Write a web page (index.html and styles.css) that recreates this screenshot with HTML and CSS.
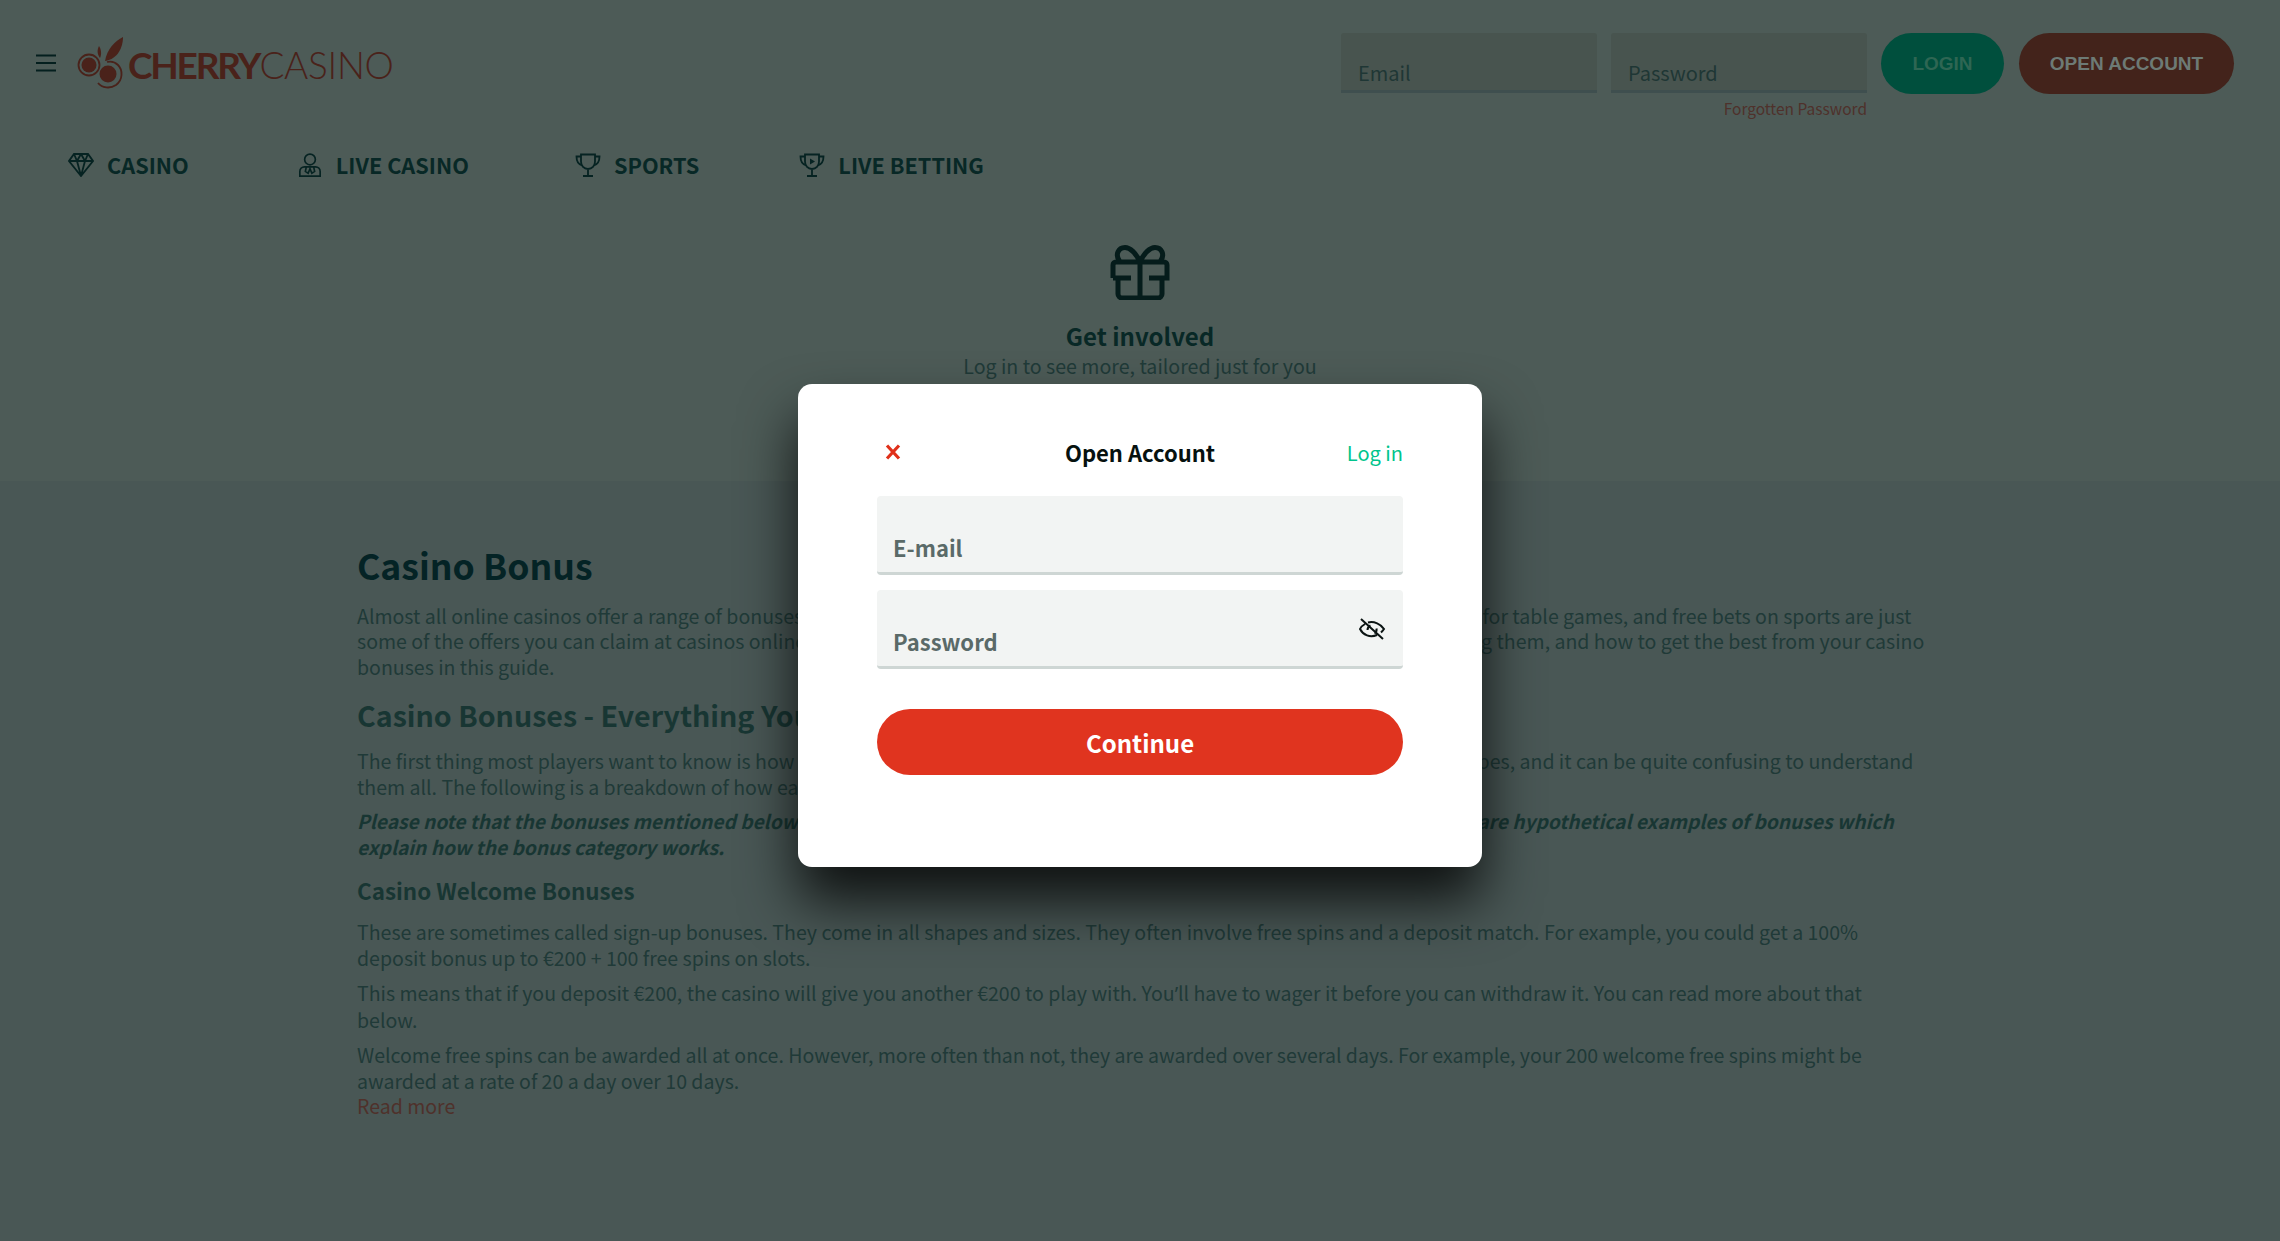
FILE: index.html
```html
<!DOCTYPE html>
<html>
<head>
    <meta charset="UTF-8">
    <meta name="viewport" content="width=device-width, initial-scale=1.0">
    <title>Cherry Casino</title>
    <link rel="stylesheet" href="styles.css">
</head>
<body>
    <div class="hero">
        <header class="topbar">
            <div class="brand">
                <svg class="burger" viewBox="0 0 20 18"><path d="M0 1.5h20M0 9h20M0 16.5h20"/></svg>
                <svg class="cherry" viewBox="0 0 48 52">
                    <path class="fill" d="M28 24C30 12 38 4 46 0c0 10-5 22-18 24z"/>
                    <path class="fill" d="M23 21c-3-4-3-8-1-12 2 3 3 8 1 12z"/>
                    <circle class="fill" cx="12" cy="28" r="7.5"/>
                    <circle class="ring" cx="12" cy="28" r="10.5"/>
                    <circle class="fill" cx="31" cy="37" r="8.5"/>
                    <path class="ring" d="M21 46c4 5 12 6 18 2 7-5 7-15 2-20-3-3-7-4-11-3"/>
                </svg>
                <span class="logo"><b>CHERRY</b>CASINO</span>
            </div>
            <form class="auth">
                <div class="authField"><div class="dimInput">Email</div></div>
                <div class="authField">
                    <div class="dimInput">Password</div>
                    <a class="forgot">Forgotten Password</a>
                </div>
                <button type="button" class="loginBtn">LOGIN</button>
                <button type="button" class="openBtn">OPEN ACCOUNT</button>
            </form>
        </header>

        <nav class="mainNav">
            <a class="navItem">
                <svg viewBox="0 0 26 24"><path d="M6 1h14l5 7-12 15L1 8zM1 8h24M9 8l4 15 4-15M6 1l3 7 4-7 4 7 3-7"/></svg>
                CASINO
            </a>
            <a class="navItem liveCasino">
                <svg viewBox="0 0 26 26"><circle cx="13" cy="7" r="5.8"/><path d="M2 25v-5a5 5 0 0 1 5-5h12a5 5 0 0 1 5 5v5zM9 15l-1 5 3 2 2-5 2 5 3-2-1-5"/></svg>
                LIVE CASINO
            </a>
            <a class="navItem sports">
                <svg viewBox="0 0 26 24"><path d="M6 1.5h14v7c0 4.5-3 7.5-7 7.5s-7-3-7-7.5zM6 3.500H1.500c0 5 1.500 8 6 9M20 3.500h4.500c0 5-1.500 8-6 9M13 16v6.500M8 23h10"/></svg>
                SPORTS
            </a>
            <a class="navItem">
                <svg viewBox="0 0 26 24"><path d="M6 1.5h14v7c0 4.5-3 7.5-7 7.5s-7-3-7-7.500zM6 3.500H1.500c0 5 1.500 8 6 9M20 3.500h4.500c0 5-1.500 8-6 9M13 16v6.500M8 23h10"/><path class="play" d="M11 5.500l5 3-5 3z"/></svg>
                LIVE BETTING
            </a>
        </nav>

        <div class="promo">
            <svg class="gift" viewBox="0 0 60 55"><path d="M3 33V20a3 3 0 0 1 3-3h48a3 3 0 0 1 3 3v13H39M3 33h18M8 34v15a4 4 0 0 0 4 4h36a4 4 0 0 0 4-4V34M30 17v36M30 17C26 8 20 2.500 15 2.500 8 2.500 5 10 9.500 16M30 17c4-9 10-14.500 15-14.500 7 0 10 7.500 5.500 13.500"/></svg>
            <h2>Get involved</h2>
            <p>Log in to see more, tailored just for you</p>
        </div>
    </div>

    <main class="article">
        <h1>Casino Bonus</h1>
        <p class="intro">Almost all online casinos offer a range of bonuses. Welcome bonuses, free spins, cashback, reload offers, extra bonus money for table games, and free bets on sports are just<br>some of the offers you can claim at casinos online. We explain clearly what they are, how they work, how to go about claiming them, and how to get the best from your casino<br>bonuses in this guide.</p>
        <h2>Casino Bonuses - Everything You Need to Know</h2>
        <p class="afterH2">The first thing most players want to know is how much bonus money they can get. There are a great many different bonus types, and it can be quite confusing to understand<br>them all. The following is a breakdown of how each of the main bonus types works.</p>
        <p class="note">Please note that the bonuses mentioned below are not necessarily available on this site at this stage or to players. They are hypothetical examples of bonuses which<br>explain how the bonus category works.</p>
        <h3>Casino Welcome Bonuses</h3>
        <p class="afterH3">These are sometimes called sign-up bonuses. They come in all shapes and sizes. They often involve free spins and a deposit match. For example, you could get a 100%<br>deposit bonus up to €200 + 100 free spins on slots.</p>
        <p>This means that if you deposit €200, the casino will give you another €200 to play with. You<span class="apos">’</span>ll have to wager it before you can withdraw it. You can read more about that<br>below.</p>
        <p>Welcome free spins can be awarded all at once. However, more often than not, they are awarded over several days. For example, your 200 welcome free spins might be<br>awarded at a rate of 20 a day over 10 days.</p>
        <a class="readMore">Read more</a>
    </main>

    <div class="modal">
        <div class="modalHead">
            <svg class="closeX" viewBox="0 0 16 16"><path d="M2 1.500l12 13M14 1.500l-12 13"/></svg>
            <strong>Open Account</strong>
            <a class="logIn">Log in</a>
        </div>
        <div class="field">E-mail</div>
        <div class="field">
            Password
            <svg class="eye" viewBox="0 0 28 22"><path d="M3 1l22 20M7 6C3.500 8 2.500 9.500 2 11c3 6 10 9 17 6M10 4.500C16 3 23 6 26 11c-1 1.500-2 2.500-3 3.500M9.500 12c0-2 1-3.500 3-4.500M18.500 10.500c.5 2.500-.5 4-2 5"/></svg>
        </div>
        <button type="button" class="continueBtn">Continue</button>
    </div>
</body>
</html>
```

FILE: styles.css
```css
*{ margin: 0; padding: 0; box-sizing: border-box; }
body{ background: #495755; color: #203a38; font-family: "Noto Sans CJK SC", "Source Sans Pro", sans-serif; min-height: 1241px; overflow: hidden; }
a{ display: block; }
svg{ display: block; fill: none; }

.hero{ height: 481px; background: #4d5b57; padding-top: 33px; }
.topbar{ height: 61px; display: flex; justify-content: space-between; align-items: flex-start; padding: 0 46px 0 36px; }
.brand{ display: flex; align-items: center; height: 61px; }
.burger{ width: 20px; height: 18px; stroke: #041f1e; stroke-width: 2; margin-top: -2px; }
.cherry{ width: 48px; height: 52px; margin-left: 21px; margin-top: -1px; }
.cherry .fill{ fill: #4a221a; }
.cherry .ring{ stroke: #4a221a; stroke-width: 1.8; }
.logo{ font-family: "Lato", sans-serif; font-size: 37px; font-weight: 300; color: #4a221a; margin-left: 3px; letter-spacing: -.3px; line-height: 50px; margin-top: 3px; }
.logo b{ font-weight: 700; letter-spacing: -2.2px; }

.auth{ display: flex; align-items: flex-start; gap: 14px; }
.authField{ width: 256px; }
.dimInput{ height: 60px; padding: 25px 0 0 17px; background: #48544f; border-bottom: 3px solid #3f4f4f; border-radius: 3px 3px 0 0; font-size: 20px; line-height: 30px; color: #1f3735; }
.forgot{ font-size: 15.5px; line-height: 22px; margin-top: 4px; color: #4f312b; text-align: right; }
.loginBtn, .openBtn{ height: 61px; border: 0; border-radius: 31px; font-family: "Liberation Sans", sans-serif; font-weight: 700; font-size: 19px; }
.loginBtn{ width: 123px; background: #004f3d; color: #2e6653; }
.openBtn{ width: 215px; background: #43231b; color: #6d7a75; margin-left: 1px; }

.mainNav{ display: flex; padding-left: 68px; margin-top: 56px; }
.navItem{ display: flex; align-items: center; gap: 13px; height: 30px; font-size: 21.7px; font-weight: 700; line-height: 30px; color: #082826; margin-right: 108px; }
.navItem.liveCasino{ margin-right: 106px; }
.navItem.sports{ margin-right: 100px; }
.navItem svg{ width: 26px; height: 24px; stroke: #062322; stroke-width: 1.8; }
.navItem .play{ fill: #062322; stroke: none; }

.promo{ margin-top: 65px; text-align: center; }
.gift{ width: 60px; height: 55px; margin: 0 auto; stroke: #051c1b; stroke-width: 5; }
.promo h2{ font-size: 24px; font-weight: 700; line-height: 34px; margin-top: 18.5px; color: #082826; }
.promo p{ font-size: 19.6px; line-height: 26px; }

.article{ width: 1600px; margin-left: 357px; padding-top: 58.5px; }
.article h1{ font-size: 35.6px; font-weight: 700; line-height: 50px; color: #042325; }
.article h2{ font-size: 28.6px; font-weight: 700; line-height: 40px; margin-top: 16px; color: #183633; }
.article h3{ font-size: 22.4px; font-weight: 700; line-height: 30px; margin-top: 14.5px; color: #183633; }
.article p{ font-size: 19.55px; line-height: 25.5px; margin-top: 10px; }
.article .intro{ margin-top: 13px; }
.article .afterH2{ margin-top: 13.2px; }
.article .afterH3{ margin-top: 14.5px; }
.article .note{ margin-top: 10px; font-size: 19.15px; font-weight: 700; font-style: italic; color: #183633; }
.apos{ font-family: "Noto Sans", sans-serif; }
.readMore{ font-size: 19.55px; line-height: 25.5px; color: #4f312b; }

.modal{ position: absolute; left: 798px; top: 384px; width: 684px; height: 483px; padding: 50px 79px 0; background: #fff; border-radius: 14px; box-shadow: 0 34px 56px rgba(0,0,0,.8); }
.modalHead{ display: grid; grid-template-columns: 1fr auto 1fr; align-items: center; height: 36px; margin-bottom: 26px; }
.modalHead strong{ font-size: 22px; font-weight: 700; color: #06110f; }
.closeX{ width: 16px; height: 16px; margin-left: 8px; stroke: #e0301a; stroke-width: 3.2; }
.logIn{ font-size: 20px; color: #00c48c; text-align: right; }
.field{ position: relative; height: 79px; margin-bottom: 15px; padding: 33px 0 0 16px; background: #f2f4f3; border-bottom: 3px solid #ced6d4; border-radius: 4px; font-size: 22px; line-height: 36px; color: #5a6a68; font-weight: 700; }
.eye{ position: absolute; right: 17px; top: 28px; width: 28px; height: 22px; stroke: #0b1413; stroke-width: 2; }
.continueBtn{ display: block; width: 100%; height: 66px; margin-top: 40px; border: 0; border-radius: 33px; background: #e0341f; color: #fff; font-family: inherit; font-size: 24px; font-weight: 700; }
```
